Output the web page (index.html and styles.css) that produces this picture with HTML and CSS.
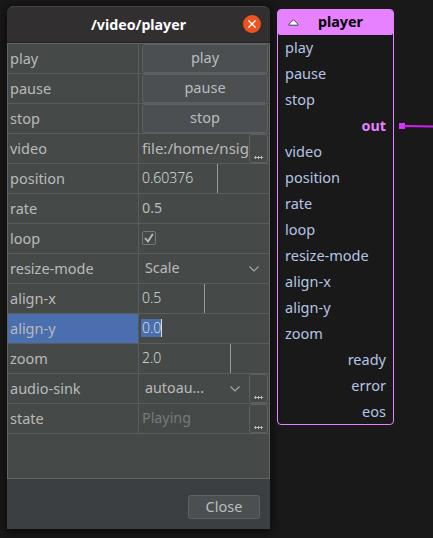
FILE: index.html
```html
<!DOCTYPE html>
<html lang="en">
<head>
<meta charset="utf-8">
<title>/video/player</title>
<link rel="stylesheet" href="styles.css">
</head>
<body>
<main class="desk">
  <section class="dialog">
    <header class="titlebar">
      <h1>/video/player</h1>
      <svg class="close-icon" width="18" height="18" viewBox="0 0 18 18"><circle cx="9" cy="9" r="9" fill="#e95420"/><path d="M5.5 5.5l7 7M12.5 5.5l-7 7" stroke="#fff" stroke-width="1.4"/></svg>
    </header>
    <div class="table">
      <div class="row"><span class="name">play</span><div class="cell"><button class="push">play</button></div></div>
      <div class="row"><span class="name">pause</span><div class="cell"><button class="push">pause</button></div></div>
      <div class="row"><span class="name">stop</span><div class="cell"><button class="push">stop</button></div></div>
      <div class="row"><span class="name">video</span><div class="cell"><span class="value file">file:/home/nsig</span><button class="more"><svg width="9" height="3" viewBox="0 0 9 3"><path d="M0 1.5h9M1.5 0v3M4.5 0v3M7.5 0v3"/></svg></button></div></div>
      <div class="row"><span class="name">position</span><div class="cell"><span class="value num to-position">0.60376</span></div></div>
      <div class="row"><span class="name">rate</span><div class="cell"><span class="value">0.5</span></div></div>
      <div class="row"><span class="name">loop</span><div class="cell"><span class="check"><svg width="12" height="12" viewBox="0 0 12 12"><path d="M2 6l3 3.5L9.8 2" fill="none" stroke="#b9bcbc" stroke-width="1.9"/></svg></span></div></div>
      <div class="row"><span class="name">resize-mode</span><div class="cell"><span class="value choice">Scale</span><svg class="arrow arrow-end" width="10" height="6" viewBox="0 0 10 6"><path d="M.5.5L5 5 9.5.5"/></svg></div></div>
      <div class="row"><span class="name">align-x</span><div class="cell"><span class="value num to-half">0.5</span></div></div>
      <div class="row active"><span class="name">align-y</span><div class="cell"><span class="selected num">0.0</span></div></div>
      <div class="row"><span class="name">zoom</span><div class="cell"><span class="value num to-zoom">2.0</span></div></div>
      <div class="row"><span class="name">audio-sink</span><div class="cell"><span class="value choice">autoau...</span><svg class="arrow" width="10" height="6" viewBox="0 0 10 6"><path d="M.5.5L5 5 9.5.5"/></svg><button class="more"><svg width="9" height="3" viewBox="0 0 9 3"><path d="M0 1.5h9M1.5 0v3M4.5 0v3M7.5 0v3"/></svg></button></div></div>
      <div class="row"><span class="name">state</span><div class="cell"><span class="value muted">Playing</span><button class="more"><svg width="9" height="3" viewBox="0 0 9 3"><path d="M0 1.5h9M1.5 0v3M4.5 0v3M7.5 0v3"/></svg></button></div></div>
    </div>
    <footer><button class="close">Close</button></footer>
  </section>
  <section class="node">
    <header><svg width="11" height="7" viewBox="0 0 11 7"><path d="M5.5.7L10 5.2v1H1v-1z" fill="#fff" stroke="#333" stroke-width=".9"/></svg><h2>player</h2></header>
    <ul>
      <li>play</li><li>pause</li><li>stop</li><li class="out">out</li><li>video</li><li>position</li><li>rate</li><li>loop</li><li>resize-mode</li><li>align-x</li><li>align-y</li><li>zoom</li><li class="right">ready</li><li class="right">error</li><li class="right">eos</li>
    </ul>
  </section>
  <svg class="wire" width="35" height="8" viewBox="0 0 35 8"><path d="M0 1h6v6H0z" fill="#d633ff"/><path d="M5 4Q20 4 35 4.6" fill="none" stroke="#d020f0" stroke-width="2"/></svg>
</main>
</body>
</html>
```

FILE: styles.css
```css
* { box-sizing: border-box; }
body { margin: 0; background: #191919; font: 15px/20px "Noto Sans", "Open Sans", sans-serif; overflow: hidden; }
h1, h2, ul { margin: 0; padding: 0; }
button { font: inherit; color: #b9bdbf; padding: 0; border: 1px solid #5e6162; border-radius: 3px; background: #4b4f51; }
.desk { position: relative; display: flex; align-items: flex-start; gap: 7px; width: 433px; height: 538px; padding: 6px 0 0 7px; }
.dialog { width: 263px; height: 523px; background: #3c3f41; border-radius: 7px 7px 0 0; box-shadow: 0 2px 9px 2px #0c0c0c; }
.titlebar { height: 37px; display: flex; align-items: center; padding: 0 9px 0 27px; background: #322f30; border-top: 1px solid #484546; border-bottom: 1px solid #222; border-radius: 7px 7px 0 0; }
h1 { flex: 1; text-align: center; font-size: 14.2px; line-height: 20px; color: #fff; font-weight: 700; }
.close-icon { flex: none; margin-top: -1px; }
.table { height: 436px; background: #454948; border: 1px solid #646464; }
.row { display: flex; height: 30px; border-bottom: 1px solid #5a5d5d; color: #b9bbba; }
.name { width: 131px; padding: 4px 0 0 2px; border-right: 1px solid #5a5d5d; font-size: 14.5px; }
.cell { flex: 1; min-width: 0; display: flex; align-items: center; padding-left: 3px; }
.push { flex: 1; height: 29px; margin-right: 1px; padding-bottom: 3px; align-self: flex-start; line-height: 20px; font-size: 14.5px; }
.value { flex: 1; min-width: 0; white-space: nowrap; line-height: 20px; margin-top: -1px; font-size: 14.3px; }
.file { overflow: hidden; font-size: 15px; margin-top: -2px; }
.more { width: 19px; height: 29px; flex: none; margin-right: 1px; display: flex; justify-content: center; align-items: flex-end; padding-bottom: 3px; background: #454948; }
.more svg { fill: none; stroke: #c0c3c3; stroke-width: .9; }
.num { font-family: "Open Sans", sans-serif; font-weight: 300; font-size: 14px; color: #e0e2e2; }
.to-position, .to-half, .to-zoom { flex: none; height: 29px; line-height: 28px; margin-top: 0; border-right: 1px solid #969999; }
.to-position { width: 76px; }
.to-half { width: 63px; }
.to-zoom { width: 89px; }
.check { width: 14px; height: 14px; margin-top: -1px; border: 1px solid #767979; border-radius: 2px; }
.check svg { display: block; }
.choice { padding-left: 3px; }
.arrow { fill: none; stroke: #a7aaaa; stroke-width: 1.1; margin-right: 9px; }
.arrow-end { margin-right: 10px; }
.active .name { background: #4b6eaf; }
.selected { height: 18px; line-height: 17px; margin: -1px 0 0 -1px; padding-left: 1px; border-right: 1px solid #ddd; background: #4b6eaf; }
.muted { color: #777a7a; }
footer { display: flex; justify-content: flex-end; padding: 16px 10px 0 0; }
.close { width: 72px; height: 24px; padding-bottom: 2px; font-size: 14.5px; line-height: 20px; }
.node { width: 117px; height: 416px; margin-top: 3px; border: 1px solid #e681ff; border-radius: 4px; font-size: 14.5px; color: #b5c4e5; }
.node header { position: relative; height: 25px; display: flex; align-items: center; padding-left: 10px; background: #e681ff; border-radius: 2px; color: #000; }
h2 { font-size: 14.3px; line-height: 20px; margin: -2px 0 0 19px; }
ul { list-style: none; }
li { height: 26px; padding: 2px 7px 0; }
.right { text-align: right; }
li.out { text-align: right; font-weight: 700; font-size: 14.3px; padding-top: 3px; color: #e681ff; }
.wire { position: absolute; left: 399px; top: 122px; }
```
